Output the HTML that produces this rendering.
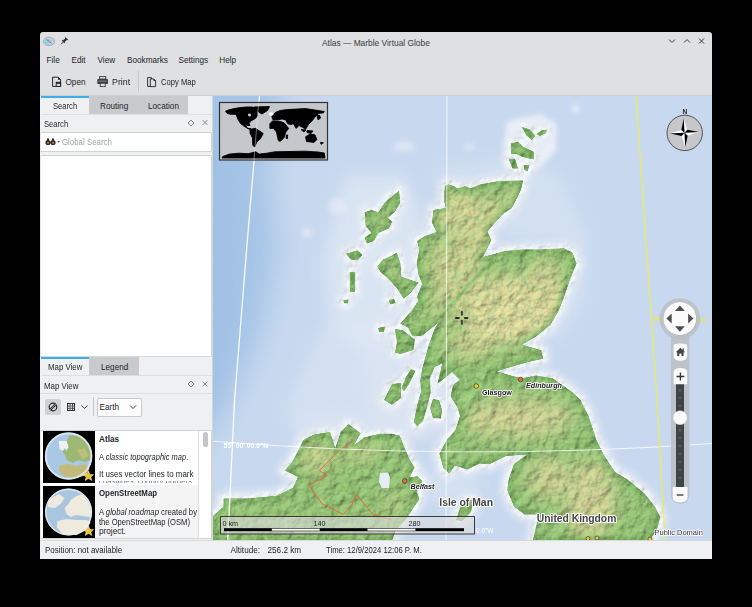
<!DOCTYPE html>
<html><head><meta charset="utf-8">
<style>
*{margin:0;padding:0;box-sizing:border-box}
html,body{width:752px;height:607px;background:#000;overflow:hidden;font-family:"Liberation Sans",sans-serif;color:#232629}
.a{position:absolute;white-space:nowrap}
.t{font-size:8.2px;line-height:10px}
svg{position:absolute;left:0;top:0}
</style></head>
<body>
<!-- window frame -->
<div class="a" style="left:40px;top:32px;width:672px;height:527px;background:#dee0e2;border-radius:3px 3px 0 0"></div>
<!-- title -->
<div class="a t" style="left:322px;top:37.6px;font-size:8.4px;color:#3a3d40">Atlas — Marble Virtual Globe</div>
<svg width="752" height="607" style="pointer-events:none">
  <!-- app icon -->
  <ellipse cx="49" cy="41.4" rx="5.6" ry="4.3" fill="#c9ccd0" stroke="#9a9ea2" stroke-width="0.7"/>
  <ellipse cx="48" cy="41.4" rx="3.4" ry="2.6" fill="#86d2f0"/>
  <path d="M46.5,39.3 L51.5,43.3" stroke="#c0504d" stroke-width="0.7"/>
  <!-- pin -->
  <path d="M61,44.3 L63.3,42" stroke="#232629" stroke-width="0.9"/><path d="M62,40.6 L63.2,40.6 L65.4,38.4 L65.1,37.7 L65.9,37.7 L67.4,39.2 L67.4,40 L66.7,39.7 L64.5,41.9 L64.5,43.1 Z" fill="#232629" stroke="#232629" stroke-width="0.5"/>
  <!-- window buttons -->
  <path d="M669,39.5 L672,42.5 L675,39.5" stroke="#3a3d40" stroke-width="1" fill="none"/>
  <path d="M684,42.5 L687,39.5 L690,42.5" stroke="#3a3d40" stroke-width="1" fill="none"/>
  <path d="M699,38.5 L704,43.5 M704,38.5 L699,43.5" stroke="#3a3d40" stroke-width="1" fill="none"/>
</svg>
<!-- menu -->
<div class="a t" style="left:46.5px;top:55.8px">File</div>
<div class="a t" style="left:71.5px;top:55.8px">Edit</div>
<div class="a t" style="left:97.5px;top:55.8px">View</div>
<div class="a t" style="left:127px;top:55.8px">Bookmarks</div>
<div class="a t" style="left:178.5px;top:55.8px">Settings</div>
<div class="a t" style="left:219.3px;top:55.8px">Help</div>
<!-- toolbar -->
<svg width="752" height="607">
  <!-- open icon -->
  <path d="M52.6,77.2 L58.2,77.2 L60.6,79.6 L60.6,86.4 L52.6,86.4 Z" fill="none" stroke="#232629" stroke-width="1"/>
  <path d="M58,76.8 L61,79.8 L58,79.8 Z" fill="#232629"/>
  <rect x="56.2" y="82.3" width="4.4" height="4.1" fill="#dee0e2" stroke="#232629" stroke-width="1"/>
  <rect x="56.2" y="82.3" width="4.4" height="1.6" fill="#232629"/>
  <!-- print icon -->
  <rect x="99.6" y="76.6" width="6.2" height="2.4" fill="none" stroke="#3a3d40" stroke-width="0.9"/>
  <rect x="97.3" y="79" width="10.7" height="5" rx="0.8" fill="#3a3d40"/>
  <rect x="98.5" y="80.6" width="8.3" height="1" fill="#8a8d90"/>
  <rect x="100.3" y="83.2" width="4.9" height="3.4" fill="#dee0e2" stroke="#3a3d40" stroke-width="0.9"/>
  <!-- copy icon -->
  <path d="M147.6,77.6 L151.6,77.6 L151.6,86.4 L147.6,86.4 Z" fill="none" stroke="#232629" stroke-width="0.9"/>
  <path d="M150.3,79 L153.8,79 L155.6,80.8 L155.6,86.6 L150.3,86.6 Z" fill="#dee0e2" stroke="#232629" stroke-width="0.9"/>
  <path d="M153.6,78.6 L156,81 L153.6,81 Z" fill="#232629"/>
</svg>
<div class="a t" style="left:65.5px;top:77.8px">Open</div>
<div class="a t" style="left:111.5px;top:77.8px;transform:scaleX(1.08);transform-origin:0 0">Print</div>
<div class="a" style="left:138px;top:71px;width:1px;height:21px;background:#c6c8ca"></div>
<div class="a t" style="left:161.3px;top:77.8px;transform:scaleX(0.93);transform-origin:0 0">Copy Map</div>
<div class="a" style="left:40px;top:95px;width:672px;height:1px;background:#cdd0d2"></div>

<!-- left panel -->
<div class="a" style="left:40px;top:96px;width:172px;height:444px;background:#eff0f1"></div>
<div class="a" style="left:212px;top:96px;width:1px;height:444px;background:#d3d5d7"></div>
<!-- tabs top -->
<div class="a" style="left:41px;top:96px;width:48px;height:2px;background:#3daee9"></div>
<div class="a" style="left:89px;top:96px;width:99px;height:18px;background:#c8cacc"></div>
<div class="a" style="left:41px;top:114px;width:171px;height:1px;background:#dcdee0"></div>
<div class="a t" style="left:53px;top:101.9px;transform:scaleX(0.93);transform-origin:0 0">Search</div>
<div class="a t" style="left:100px;top:101.9px">Routing</div>
<div class="a t" style="left:148px;top:101.9px">Location</div>
<div class="a t" style="left:44px;top:120px;transform:scaleX(0.93);transform-origin:0 0">Search</div>
<svg width="752" height="607">
  <path d="M191,120 L194,123 L191,126 L188,123 Z" fill="none" stroke="#7a7d80" stroke-width="0.9"/>
  <path d="M202.5,120 L207.5,125 M207.5,120 L202.5,125" stroke="#7a7d80" stroke-width="0.9"/>
</svg>
<div class="a" style="left:40px;top:132px;width:172px;height:20px;background:#fff;border:1px solid #d1d3d5;border-left-color:#e6e7e8;border-radius:2px"></div>
<svg width="752" height="607">
  <circle cx="48" cy="142.5" r="2.6" fill="#2b2b2b"/>
  <circle cx="53" cy="142.5" r="2.6" fill="#2b2b2b"/>
  <circle cx="48" cy="142.8" r="1.1" fill="#c87a3a"/>
  <circle cx="53" cy="142.8" r="1.1" fill="#c87a3a"/>
  <rect x="47" y="138.5" width="2" height="2.5" fill="#2b2b2b"/><rect x="52" y="138.5" width="2" height="2.5" fill="#2b2b2b"/>
  <path d="M57,141 L60,141 L58.5,143 Z" fill="#6b6e71"/>
</svg>
<div class="a t" style="left:62px;top:138px;color:#a0a2a4;transform:scaleX(0.96);transform-origin:0 0">Global Search</div>
<div class="a" style="left:40px;top:155px;width:172px;height:202px;background:#fff;border:1px solid #d1d3d5;border-left-color:#e6e7e8;border-radius:2px"></div>
<!-- tabs bottom -->
<div class="a" style="left:40px;top:356px;width:172px;height:1px;background:#d8dadc"></div>
<div class="a" style="left:41px;top:357px;width:48px;height:2px;background:#3daee9"></div>
<div class="a" style="left:89px;top:357px;width:50px;height:18px;background:#c8cacc"></div>
<div class="a" style="left:41px;top:375px;width:171px;height:1px;background:#dcdee0"></div>
<div class="a t" style="left:48px;top:363.2px;transform:scaleX(0.96);transform-origin:0 0">Map View</div>
<div class="a t" style="left:101px;top:363.2px">Legend</div>
<div class="a t" style="left:44px;top:381.8px;transform:scaleX(0.96);transform-origin:0 0">Map View</div>
<svg width="752" height="607">
  <path d="M191,381 L194,384 L191,387 L188,384 Z" fill="none" stroke="#7a7d80" stroke-width="0.9"/>
  <path d="M202.5,381.5 L207.5,386.5 M207.5,381.5 L202.5,386.5" stroke="#7a7d80" stroke-width="0.9"/>
</svg>
<div class="a" style="left:40px;top:393px;width:172px;height:1px;background:#dcdee0"></div>
<div class="a" style="left:45px;top:399px;width:16px;height:16px;background:#cfd1d3;border-radius:2px"></div>
<svg width="752" height="607">
  <circle cx="53" cy="407" r="3.8" fill="none" stroke="#232629" stroke-width="1.2"/>
  <path d="M50.2,409.8 L55.8,404.2" stroke="#232629" stroke-width="2.2"/>
  <path d="M50.2,409.8 L55.8,404.2" stroke="#cfd1d3" stroke-width="0.6"/>
  <rect x="67.5" y="403.5" width="7" height="7" fill="none" stroke="#232629" stroke-width="0.9"/>
  <path d="M70,403.5 V410.5 M72.5,403.5 V410.5 M67.5,406 H74.5 M67.5,408.3 H74.5" stroke="#232629" stroke-width="0.7"/>
  <path d="M81.5,405.5 L84.5,408.5 L87.5,405.5" fill="none" stroke="#232629" stroke-width="0.9"/>
</svg>
<div class="a" style="left:93px;top:397px;width:1px;height:19px;background:#c6c8ca"></div>
<div class="a" style="left:96.5px;top:398px;width:45.2px;height:18.5px;background:#fcfcfc;border:1px solid #c8cacc;border-radius:2px"></div>
<div class="a t" style="left:99.5px;top:403.4px">Earth</div>
<svg width="752" height="607"><path d="M130,405.5 L133,408.5 L136,405.5" fill="none" stroke="#232629" stroke-width="0.9"/></svg>
<!-- list -->
<div class="a" style="left:40px;top:430px;width:172px;height:109px;background:#fff;border:1px solid #d1d3d5;border-left-color:#e6e7e8"></div>
<div class="a" style="left:42px;top:485px;width:156px;height:53px;background:#f4f4f5"></div>
<div class="a" style="left:198px;top:431px;width:1px;height:108px;background:#dcdee0"></div>
<div class="a" style="left:203px;top:432px;width:5px;height:15px;background:#c2c4c6;border-radius:3px"></div>
<svg width="752" height="607">
  <defs>
    <radialGradient id="g1" cx="0.45" cy="0.4" r="0.6">
      <stop offset="0" stop-color="#b9cf9a"/><stop offset="0.6" stop-color="#a9c49a"/><stop offset="1" stop-color="#d7e3ec"/>
    </radialGradient>
    <radialGradient id="g2" cx="0.45" cy="0.4" r="0.6">
      <stop offset="0" stop-color="#c7d6e4"/><stop offset="0.7" stop-color="#d0dbe2"/><stop offset="1" stop-color="#e3e9ee"/>
    </radialGradient>
  </defs>
  <rect x="43" y="431" width="52" height="52" fill="#000"/>
  <g transform="translate(68.6,456)">
    <circle r="23.5" fill="#a8c8e6"/>
    <path d="M1,-21 L10,-20 L18,-14 L22,-4 L23,4 L16,6 L10,4 L4,7 L-2,4 L-4,-2 L0,-8 L-2,-14 Z" fill="#9cb872"/>
    <path d="M8,-6 L16,-8 L20,0 L14,3 Z" fill="#c6c07e" opacity="0.8"/>
    <path d="M-9,9 L0,8 L8,10 L16,8 L21,12 L18,19 L8,22 L-4,21 L-10,15 Z" fill="#c2bb7c"/>
    <path d="M-10,-15 L-2,-15 L0,-9 L-4,-4 L-9,-7 Z" fill="#eef2f4"/>
    <path d="M-6,-5 L-3.5,-8 L-2,-3 L-5,-2 Z" fill="#9cb872"/>
    <circle r="22.8" fill="none" stroke="#e3edf5" stroke-width="2" opacity="0.85"/>
  </g>
  <path d="M88.5,471 L90,474.5 L93.6,474.7 L90.8,477 L91.8,480.5 L88.5,478.5 L85.2,480.5 L86.2,477 L83.4,474.7 L87,474.5 Z" fill="#f2c230" stroke="#fff7c0" stroke-width="0.5"/>
  <rect x="43" y="486" width="52" height="52" fill="#000"/>
  <g transform="translate(68.6,512)">
    <circle r="23.5" fill="#a9c5df"/>
    <path d="M-20,-12 L-10,-18 L-4,-14 L-8,-8 L-14,-4 L-21,-5 Z" fill="#efeade"/>
    <path d="M2,-12 L8,-16 L14,-18 L20,-10 L23,0 L22,5 L14,4 L8,3 L2,5 L-2,2 L-4,-4 L0,-8 Z" fill="#efeade"/>
    <path d="M-11,9 L-2,7 L8,8 L18,8 L22,10 L18,18 L8,23 L-6,22 L-12,15 Z" fill="#efeade"/>
    <circle r="22.8" fill="none" stroke="#eef2f6" stroke-width="1.4" opacity="0.8"/>
  </g>
  <path d="M88.5,526 L90,529.5 L93.6,529.7 L90.8,532 L91.8,535.5 L88.5,533.5 L85.2,535.5 L86.2,532 L83.4,529.7 L87,529.5 Z" fill="#f2c230" stroke="#fff7c0" stroke-width="0.5"/>
</svg>
<div class="a t" style="left:99px;top:434.9px;font-weight:bold">Atlas</div>
<div class="a t" style="left:99px;top:452.7px;transform:scaleX(0.916);transform-origin:0 0">A <i>classic topographic map</i>.</div>
<div class="a t" style="left:99px;top:470.4px;transform:scaleX(0.97);transform-origin:0 0">It uses vector lines to mark</div>
<div class="a" style="left:99px;top:480.5px;width:98px;height:2px;overflow:hidden"><div class="t" style="margin-top:-3.6px;color:#777;transform:scaleX(0.95);transform-origin:0 0">coastlines, country borders</div></div>
<div class="a t" style="left:99px;top:489.3px;font-weight:bold;transform:scaleX(0.96);transform-origin:0 0">OpenStreetMap</div>
<div class="a t" style="left:99px;top:508px;transform:scaleX(0.94);transform-origin:0 0">A <i>global roadmap</i> created by</div>
<div class="a t" style="left:99px;top:517.5px;transform:scaleX(0.93);transform-origin:0 0">the OpenStreetMap (OSM)</div>
<div class="a t" style="left:99px;top:527px">project.</div>


<svg width="752" height="607" viewBox="0 0 752 607">
  <defs>
    <clipPath id="mapclip"><rect x="213" y="96" width="499" height="444"/></clipPath>
    <clipPath id="landclip"><path d="M444.7,186 L448,184.4 L454,186 L457.4,188.4 L465.4,186 L470.2,188.4 L480,184.4 L499,181 L523,180.6 L521,190 L512,207.7 L501.9,215 L487.3,231.6 L491.3,240 L483,257 L505.2,251 L522,249.6 L541.6,249.6 L564,248.2 L572.4,252.4 L576.6,263.6 L569.6,280.4 L564,297.2 L558.4,311.2 L550,325.2 L536,336.4 L522,344.8 L541.6,350.3 L543,358.7 L530.4,361.5 L510.8,367.1 L496.8,371.3 L510.8,375.5 L522,378.3 L536,375.5 L552.8,378.3 L572.4,392.3 L580.5,400 L588.5,416 L596.4,440 L604.4,456 L615,472 L628.3,480 L644.3,493.2 L654.9,506.5 L660.2,517.1 L657.6,527.8 L649.6,541 L532.6,541 L536.5,525.1 L539.2,514.5 L524.6,514.5 L514,506.5 L507.3,490.5 L508.6,479.9 L513.9,464 L527.2,454.6 L506,456 L490,464 L480,463.5 L467,469.4 L455.1,465.5 L449.2,473.4 L443.2,467.4 L439.3,453.6 L447,440 L455.4,430 L460,416 L457.7,408 L450.7,396.5 L453,385 L460,380 L452,372 L446.1,376.9 L437.5,383.8 L440,373 L442.4,363.3 L434.5,367.2 L430,378 L430.6,393.1 L427.7,404.6 L423.1,420.7 L417.3,426.5 L413.8,421.9 L417.3,404.6 L421.3,390.8 L420.2,381.5 L422,370 L424.7,359.3 L429.3,343.5 L434.5,329 L438.5,322.4 L421.4,336.2 L412.1,335.6 L408.2,327.7 L400.3,323.7 L412.1,309.9 L418.7,300 L416.8,297.2 L422.1,283.9 L418.1,273.2 L416.8,262.6 L419.4,249.3 L417,241 L425,236 L436.7,232 L432,222.7 L433.5,210 L446,208 L443.9,200.3 Z M212,517 L223.6,506.4 L223.6,498.4 L247.6,498.4 L276.8,495.7 L292.8,487.8 L298.1,477.1 L284.8,470.5 L292.8,461.2 L303.4,439.9 L314,434.6 L330,431.9 L335.3,447.9 L340.7,431.9 L348.6,423.9 L360.6,433.2 L354,445.2 L364.6,437.2 L380,433.8 L391.9,433.8 L399.8,435.8 L403.7,445.7 L409.6,459.5 L414.6,467.4 L409.6,477.3 L417.5,476.3 L422.5,481.3 L419.5,487.2 L416.6,491.1 L419.5,499 L412.6,508.9 L407.7,516.8 L395.8,530.7 L391.9,541 L212,541 Z M399.1,190.4 L400.3,203 L394.5,212.3 L387.6,218 L392.2,221.5 L388.8,228.4 L378.4,233 L373.8,241 L366.9,243.4 L364.6,237.6 L371.5,233 L365.7,226.1 L364.6,212.3 L371.5,210 L378.4,212.3 L385.3,201.9 Z M346.1,253.7 L357.6,250.3 L362.3,254.9 L357.6,260.2 L350.7,259.5 Z M349.6,272.2 L355.3,272.2 L355,291.8 L350,291.8 Z M343.4,300 L348.4,299.4 L348,303.3 L344,303.3 Z M377.2,266.4 L383,259.5 L391.1,256 L396.8,252.6 L400.3,263 L401.4,276.8 L418.7,282.5 L410.6,292.9 L403.7,298.7 L396.8,288.3 L387.6,277.9 L380.7,272.2 Z M388.8,300 L394,298.7 L395.7,303 L390,304.4 Z M395,329 L402.9,330.3 L414.8,339.5 L413.5,350 L400.3,354 L395,352.7 L397,342 Z M378.2,328 L384.9,326.4 L384,331.7 L379,331.7 Z M411,369 L415.5,371 L409,384 L404,391 L401.5,388 L406,377 Z M392,384 L400.7,383 L401,398 L392,404.8 L384,400 Z M433,399 L439,400 L442.1,410 L441,418.4 L433,418 L430,408 Z M456,520 L460,508 L468,500 L474,500.5 L471,512 L462,521 Z M521.5,126.8 L530,129.5 L535.5,136 L532,140 L526.5,135.5 Z M536.8,134 L541,130.5 L547,129.5 L545.5,133.5 L539.5,136 Z M510.8,143.5 L518,141.8 L523.5,147 L533.8,151.8 L533.8,159.5 L522.5,157 L516.5,154 L511,154 Z M508.8,159.2 L515,158.8 L518,168.5 L512.5,168.5 Z M523.5,165.2 L529.5,165 L527.5,171.5 L524.5,170 Z"/></clipPath>
    <filter id="blur1" x="-20%" y="-20%" width="140%" height="140%"><feGaussianBlur stdDeviation="1.2"/></filter>
    <filter id="blur2" x="-20%" y="-20%" width="140%" height="140%"><feGaussianBlur stdDeviation="2.5"/></filter>
    <filter id="blur6" x="-50%" y="-50%" width="200%" height="200%"><feGaussianBlur stdDeviation="8"/></filter>
    <filter id="blur12" x="-50%" y="-50%" width="200%" height="200%"><feGaussianBlur stdDeviation="14"/></filter>
    <filter id="tex" x="0" y="0" width="100%" height="100%">
      <feTurbulence type="turbulence" baseFrequency="0.09 0.12" numOctaves="4" seed="3" result="t"/>
      <feColorMatrix in="t" values="0 0 0 0 0.34  0 0 0 0 0.56  0 0 0 0 0.24  -3.2 0 0 0 1.0" result="c"/>
      <feGaussianBlur in="c" stdDeviation="0.4"/>
    </filter>
    <filter id="relief" x="213" y="96" width="499" height="444" filterUnits="userSpaceOnUse">
      <feTurbulence type="fractalNoise" baseFrequency="0.09" numOctaves="4" seed="5" result="noise"/>
      <feDiffuseLighting in="noise" lighting-color="#fff" surfaceScale="2.8" diffuseConstant="1.05" result="light">
        <feDistantLight azimuth="225" elevation="55"/>
      </feDiffuseLighting>
      <feComposite in="light" in2="SourceGraphic" operator="arithmetic" k1="1.2" k2="0" k3="0" k4="0" result="mul"/>
      <feComposite in="mul" in2="SourceGraphic" operator="in"/>
    </filter>
    <filter id="reliefsea" x="213" y="96" width="499" height="444" filterUnits="userSpaceOnUse">
      <feTurbulence type="fractalNoise" baseFrequency="0.12" numOctaves="3" seed="8" result="noise"/>
      <feDiffuseLighting in="noise" lighting-color="#fff" surfaceScale="2.5" diffuseConstant="1.05" result="light">
        <feDistantLight azimuth="225" elevation="55"/>
      </feDiffuseLighting>
      <feGaussianBlur in="SourceGraphic" stdDeviation="2.2" result="soft"/>
      <feComposite in="light" in2="soft" operator="arithmetic" k1="1.1" k2="0" k3="0" k4="0" result="mul"/>
      <feComposite in="mul" in2="soft" operator="in"/>
    </filter>
    <filter id="seatex" x="0" y="0" width="100%" height="100%">
      <feTurbulence type="fractalNoise" baseFrequency="0.05" numOctaves="2" seed="11" result="t"/>
      <feColorMatrix in="t" values="0 0 0 0 1  0 0 0 0 1  0 0 0 0 1  0 0 0 -1.2 0.62"/>
    </filter>
  </defs>
  <g clip-path="url(#mapclip)">
    <rect x="213" y="96" width="499" height="444" fill="#c8d9ef"/>
    <!-- deep water west -->
    <path d="M150,40 L290,40 L268,170 L278,250 L262,330 L236,390 L200,450 L150,450 Z" fill="#a5c4e6" filter="url(#blur12)"/>
    <path d="M150,150 L226,150 L232,300 L205,420 L150,420 Z" fill="#9ebfe4" filter="url(#blur12)" opacity="0.7"/>
    <!-- shelf light zones -->
    <g fill="#dfe8f3" filter="url(#blur6)">
      <path d="M345,175 L405,175 L425,225 L412,300 L400,350 L372,356 L330,330 L322,262 Z" opacity="0.75"/>
      <path d="M440,165 L520,160 L560,175 L590,240 L585,300 L560,340 L530,330 L560,280 L565,250 L520,240 L490,230 L440,200 Z" opacity="0.45"/>
      <path d="M360,360 L430,350 L445,420 L410,440 L372,420 Z" opacity="0.55"/>
      <ellipse cx="452" cy="485" rx="30" ry="22" opacity="0.55"/>
      <ellipse cx="330" cy="425" rx="40" ry="12" opacity="0.5"/>
      <path d="M320,330 L420,310 L450,440 L300,440 L285,410 Z" opacity="0.55"/>
    </g>
    <g fill="#e9eff7" filter="url(#blur2)">
      <path d="M506,122 L540,114 L556,124 L556,150 L540,168 L522,174 L508,170 L505,150 Z"/>
      <ellipse cx="338" cy="206" rx="10" ry="8" opacity="0.6"/>
      <ellipse cx="307" cy="233" rx="6" ry="4.5" opacity="0.6"/>
      <ellipse cx="404" cy="146" rx="11" ry="5" opacity="0.6"/>
      <ellipse cx="469" cy="147" rx="4.5" ry="3.5" opacity="0.7"/>
      <circle cx="575.6" cy="109" r="3.5"/>
    </g>
    <!-- coastal halo -->
    <path d="M444.7,186 L448,184.4 L454,186 L457.4,188.4 L465.4,186 L470.2,188.4 L480,184.4 L499,181 L523,180.6 L521,190 L512,207.7 L501.9,215 L487.3,231.6 L491.3,240 L483,257 L505.2,251 L522,249.6 L541.6,249.6 L564,248.2 L572.4,252.4 L576.6,263.6 L569.6,280.4 L564,297.2 L558.4,311.2 L550,325.2 L536,336.4 L522,344.8 L541.6,350.3 L543,358.7 L530.4,361.5 L510.8,367.1 L496.8,371.3 L510.8,375.5 L522,378.3 L536,375.5 L552.8,378.3 L572.4,392.3 L580.5,400 L588.5,416 L596.4,440 L604.4,456 L615,472 L628.3,480 L644.3,493.2 L654.9,506.5 L660.2,517.1 L657.6,527.8 L649.6,541 L532.6,541 L536.5,525.1 L539.2,514.5 L524.6,514.5 L514,506.5 L507.3,490.5 L508.6,479.9 L513.9,464 L527.2,454.6 L506,456 L490,464 L480,463.5 L467,469.4 L455.1,465.5 L449.2,473.4 L443.2,467.4 L439.3,453.6 L447,440 L455.4,430 L460,416 L457.7,408 L450.7,396.5 L453,385 L460,380 L452,372 L446.1,376.9 L437.5,383.8 L440,373 L442.4,363.3 L434.5,367.2 L430,378 L430.6,393.1 L427.7,404.6 L423.1,420.7 L417.3,426.5 L413.8,421.9 L417.3,404.6 L421.3,390.8 L420.2,381.5 L422,370 L424.7,359.3 L429.3,343.5 L434.5,329 L438.5,322.4 L421.4,336.2 L412.1,335.6 L408.2,327.7 L400.3,323.7 L412.1,309.9 L418.7,300 L416.8,297.2 L422.1,283.9 L418.1,273.2 L416.8,262.6 L419.4,249.3 L417,241 L425,236 L436.7,232 L432,222.7 L433.5,210 L446,208 L443.9,200.3 Z M212,517 L223.6,506.4 L223.6,498.4 L247.6,498.4 L276.8,495.7 L292.8,487.8 L298.1,477.1 L284.8,470.5 L292.8,461.2 L303.4,439.9 L314,434.6 L330,431.9 L335.3,447.9 L340.7,431.9 L348.6,423.9 L360.6,433.2 L354,445.2 L364.6,437.2 L380,433.8 L391.9,433.8 L399.8,435.8 L403.7,445.7 L409.6,459.5 L414.6,467.4 L409.6,477.3 L417.5,476.3 L422.5,481.3 L419.5,487.2 L416.6,491.1 L419.5,499 L412.6,508.9 L407.7,516.8 L395.8,530.7 L391.9,541 L212,541 Z M399.1,190.4 L400.3,203 L394.5,212.3 L387.6,218 L392.2,221.5 L388.8,228.4 L378.4,233 L373.8,241 L366.9,243.4 L364.6,237.6 L371.5,233 L365.7,226.1 L364.6,212.3 L371.5,210 L378.4,212.3 L385.3,201.9 Z M346.1,253.7 L357.6,250.3 L362.3,254.9 L357.6,260.2 L350.7,259.5 Z M349.6,272.2 L355.3,272.2 L355,291.8 L350,291.8 Z M343.4,300 L348.4,299.4 L348,303.3 L344,303.3 Z M377.2,266.4 L383,259.5 L391.1,256 L396.8,252.6 L400.3,263 L401.4,276.8 L418.7,282.5 L410.6,292.9 L403.7,298.7 L396.8,288.3 L387.6,277.9 L380.7,272.2 Z M388.8,300 L394,298.7 L395.7,303 L390,304.4 Z M395,329 L402.9,330.3 L414.8,339.5 L413.5,350 L400.3,354 L395,352.7 L397,342 Z M378.2,328 L384.9,326.4 L384,331.7 L379,331.7 Z M411,369 L415.5,371 L409,384 L404,391 L401.5,388 L406,377 Z M392,384 L400.7,383 L401,398 L392,404.8 L384,400 Z M433,399 L439,400 L442.1,410 L441,418.4 L433,418 L430,408 Z M456,520 L460,508 L468,500 L474,500.5 L471,512 L462,521 Z M521.5,126.8 L530,129.5 L535.5,136 L532,140 L526.5,135.5 Z M536.8,134 L541,130.5 L547,129.5 L545.5,133.5 L539.5,136 Z M510.8,143.5 L518,141.8 L523.5,147 L533.8,151.8 L533.8,159.5 L522.5,157 L516.5,154 L511,154 Z M508.8,159.2 L515,158.8 L518,168.5 L512.5,168.5 Z M523.5,165.2 L529.5,165 L527.5,171.5 L524.5,170 Z" fill="none" stroke="#e3ebf5" stroke-width="18" stroke-linejoin="round" filter="url(#blur2)" opacity="0.6"/>
    <path d="M444.7,186 L448,184.4 L454,186 L457.4,188.4 L465.4,186 L470.2,188.4 L480,184.4 L499,181 L523,180.6 L521,190 L512,207.7 L501.9,215 L487.3,231.6 L491.3,240 L483,257 L505.2,251 L522,249.6 L541.6,249.6 L564,248.2 L572.4,252.4 L576.6,263.6 L569.6,280.4 L564,297.2 L558.4,311.2 L550,325.2 L536,336.4 L522,344.8 L541.6,350.3 L543,358.7 L530.4,361.5 L510.8,367.1 L496.8,371.3 L510.8,375.5 L522,378.3 L536,375.5 L552.8,378.3 L572.4,392.3 L580.5,400 L588.5,416 L596.4,440 L604.4,456 L615,472 L628.3,480 L644.3,493.2 L654.9,506.5 L660.2,517.1 L657.6,527.8 L649.6,541 L532.6,541 L536.5,525.1 L539.2,514.5 L524.6,514.5 L514,506.5 L507.3,490.5 L508.6,479.9 L513.9,464 L527.2,454.6 L506,456 L490,464 L480,463.5 L467,469.4 L455.1,465.5 L449.2,473.4 L443.2,467.4 L439.3,453.6 L447,440 L455.4,430 L460,416 L457.7,408 L450.7,396.5 L453,385 L460,380 L452,372 L446.1,376.9 L437.5,383.8 L440,373 L442.4,363.3 L434.5,367.2 L430,378 L430.6,393.1 L427.7,404.6 L423.1,420.7 L417.3,426.5 L413.8,421.9 L417.3,404.6 L421.3,390.8 L420.2,381.5 L422,370 L424.7,359.3 L429.3,343.5 L434.5,329 L438.5,322.4 L421.4,336.2 L412.1,335.6 L408.2,327.7 L400.3,323.7 L412.1,309.9 L418.7,300 L416.8,297.2 L422.1,283.9 L418.1,273.2 L416.8,262.6 L419.4,249.3 L417,241 L425,236 L436.7,232 L432,222.7 L433.5,210 L446,208 L443.9,200.3 Z M212,517 L223.6,506.4 L223.6,498.4 L247.6,498.4 L276.8,495.7 L292.8,487.8 L298.1,477.1 L284.8,470.5 L292.8,461.2 L303.4,439.9 L314,434.6 L330,431.9 L335.3,447.9 L340.7,431.9 L348.6,423.9 L360.6,433.2 L354,445.2 L364.6,437.2 L380,433.8 L391.9,433.8 L399.8,435.8 L403.7,445.7 L409.6,459.5 L414.6,467.4 L409.6,477.3 L417.5,476.3 L422.5,481.3 L419.5,487.2 L416.6,491.1 L419.5,499 L412.6,508.9 L407.7,516.8 L395.8,530.7 L391.9,541 L212,541 Z M399.1,190.4 L400.3,203 L394.5,212.3 L387.6,218 L392.2,221.5 L388.8,228.4 L378.4,233 L373.8,241 L366.9,243.4 L364.6,237.6 L371.5,233 L365.7,226.1 L364.6,212.3 L371.5,210 L378.4,212.3 L385.3,201.9 Z M346.1,253.7 L357.6,250.3 L362.3,254.9 L357.6,260.2 L350.7,259.5 Z M349.6,272.2 L355.3,272.2 L355,291.8 L350,291.8 Z M343.4,300 L348.4,299.4 L348,303.3 L344,303.3 Z M377.2,266.4 L383,259.5 L391.1,256 L396.8,252.6 L400.3,263 L401.4,276.8 L418.7,282.5 L410.6,292.9 L403.7,298.7 L396.8,288.3 L387.6,277.9 L380.7,272.2 Z M388.8,300 L394,298.7 L395.7,303 L390,304.4 Z M395,329 L402.9,330.3 L414.8,339.5 L413.5,350 L400.3,354 L395,352.7 L397,342 Z M378.2,328 L384.9,326.4 L384,331.7 L379,331.7 Z M411,369 L415.5,371 L409,384 L404,391 L401.5,388 L406,377 Z M392,384 L400.7,383 L401,398 L392,404.8 L384,400 Z M433,399 L439,400 L442.1,410 L441,418.4 L433,418 L430,408 Z M456,520 L460,508 L468,500 L474,500.5 L471,512 L462,521 Z M521.5,126.8 L530,129.5 L535.5,136 L532,140 L526.5,135.5 Z M536.8,134 L541,130.5 L547,129.5 L545.5,133.5 L539.5,136 Z M510.8,143.5 L518,141.8 L523.5,147 L533.8,151.8 L533.8,159.5 L522.5,157 L516.5,154 L511,154 Z M508.8,159.2 L515,158.8 L518,168.5 L512.5,168.5 Z M523.5,165.2 L529.5,165 L527.5,171.5 L524.5,170 Z" fill="none" stroke="#eaf0f7" stroke-width="10" stroke-linejoin="round" filter="url(#blur1)" opacity="0.7"/>
    <path d="M444.7,186 L448,184.4 L454,186 L457.4,188.4 L465.4,186 L470.2,188.4 L480,184.4 L499,181 L523,180.6 L521,190 L512,207.7 L501.9,215 L487.3,231.6 L491.3,240 L483,257 L505.2,251 L522,249.6 L541.6,249.6 L564,248.2 L572.4,252.4 L576.6,263.6 L569.6,280.4 L564,297.2 L558.4,311.2 L550,325.2 L536,336.4 L522,344.8 L541.6,350.3 L543,358.7 L530.4,361.5 L510.8,367.1 L496.8,371.3 L510.8,375.5 L522,378.3 L536,375.5 L552.8,378.3 L572.4,392.3 L580.5,400 L588.5,416 L596.4,440 L604.4,456 L615,472 L628.3,480 L644.3,493.2 L654.9,506.5 L660.2,517.1 L657.6,527.8 L649.6,541 L532.6,541 L536.5,525.1 L539.2,514.5 L524.6,514.5 L514,506.5 L507.3,490.5 L508.6,479.9 L513.9,464 L527.2,454.6 L506,456 L490,464 L480,463.5 L467,469.4 L455.1,465.5 L449.2,473.4 L443.2,467.4 L439.3,453.6 L447,440 L455.4,430 L460,416 L457.7,408 L450.7,396.5 L453,385 L460,380 L452,372 L446.1,376.9 L437.5,383.8 L440,373 L442.4,363.3 L434.5,367.2 L430,378 L430.6,393.1 L427.7,404.6 L423.1,420.7 L417.3,426.5 L413.8,421.9 L417.3,404.6 L421.3,390.8 L420.2,381.5 L422,370 L424.7,359.3 L429.3,343.5 L434.5,329 L438.5,322.4 L421.4,336.2 L412.1,335.6 L408.2,327.7 L400.3,323.7 L412.1,309.9 L418.7,300 L416.8,297.2 L422.1,283.9 L418.1,273.2 L416.8,262.6 L419.4,249.3 L417,241 L425,236 L436.7,232 L432,222.7 L433.5,210 L446,208 L443.9,200.3 Z M212,517 L223.6,506.4 L223.6,498.4 L247.6,498.4 L276.8,495.7 L292.8,487.8 L298.1,477.1 L284.8,470.5 L292.8,461.2 L303.4,439.9 L314,434.6 L330,431.9 L335.3,447.9 L340.7,431.9 L348.6,423.9 L360.6,433.2 L354,445.2 L364.6,437.2 L380,433.8 L391.9,433.8 L399.8,435.8 L403.7,445.7 L409.6,459.5 L414.6,467.4 L409.6,477.3 L417.5,476.3 L422.5,481.3 L419.5,487.2 L416.6,491.1 L419.5,499 L412.6,508.9 L407.7,516.8 L395.8,530.7 L391.9,541 L212,541 Z M399.1,190.4 L400.3,203 L394.5,212.3 L387.6,218 L392.2,221.5 L388.8,228.4 L378.4,233 L373.8,241 L366.9,243.4 L364.6,237.6 L371.5,233 L365.7,226.1 L364.6,212.3 L371.5,210 L378.4,212.3 L385.3,201.9 Z M346.1,253.7 L357.6,250.3 L362.3,254.9 L357.6,260.2 L350.7,259.5 Z M349.6,272.2 L355.3,272.2 L355,291.8 L350,291.8 Z M343.4,300 L348.4,299.4 L348,303.3 L344,303.3 Z M377.2,266.4 L383,259.5 L391.1,256 L396.8,252.6 L400.3,263 L401.4,276.8 L418.7,282.5 L410.6,292.9 L403.7,298.7 L396.8,288.3 L387.6,277.9 L380.7,272.2 Z M388.8,300 L394,298.7 L395.7,303 L390,304.4 Z M395,329 L402.9,330.3 L414.8,339.5 L413.5,350 L400.3,354 L395,352.7 L397,342 Z M378.2,328 L384.9,326.4 L384,331.7 L379,331.7 Z M411,369 L415.5,371 L409,384 L404,391 L401.5,388 L406,377 Z M392,384 L400.7,383 L401,398 L392,404.8 L384,400 Z M433,399 L439,400 L442.1,410 L441,418.4 L433,418 L430,408 Z M456,520 L460,508 L468,500 L474,500.5 L471,512 L462,521 Z M521.5,126.8 L530,129.5 L535.5,136 L532,140 L526.5,135.5 Z M536.8,134 L541,130.5 L547,129.5 L545.5,133.5 L539.5,136 Z M510.8,143.5 L518,141.8 L523.5,147 L533.8,151.8 L533.8,159.5 L522.5,157 L516.5,154 L511,154 Z M508.8,159.2 L515,158.8 L518,168.5 L512.5,168.5 Z M523.5,165.2 L529.5,165 L527.5,171.5 L524.5,170 Z" fill="none" stroke="#f1f5fa" stroke-width="6" stroke-linejoin="round" filter="url(#blur1)" opacity="0.95"/>
    <g filter="url(#reliefsea)" opacity="0.4"><path d="M444.7,186 L448,184.4 L454,186 L457.4,188.4 L465.4,186 L470.2,188.4 L480,184.4 L499,181 L523,180.6 L521,190 L512,207.7 L501.9,215 L487.3,231.6 L491.3,240 L483,257 L505.2,251 L522,249.6 L541.6,249.6 L564,248.2 L572.4,252.4 L576.6,263.6 L569.6,280.4 L564,297.2 L558.4,311.2 L550,325.2 L536,336.4 L522,344.8 L541.6,350.3 L543,358.7 L530.4,361.5 L510.8,367.1 L496.8,371.3 L510.8,375.5 L522,378.3 L536,375.5 L552.8,378.3 L572.4,392.3 L580.5,400 L588.5,416 L596.4,440 L604.4,456 L615,472 L628.3,480 L644.3,493.2 L654.9,506.5 L660.2,517.1 L657.6,527.8 L649.6,541 L532.6,541 L536.5,525.1 L539.2,514.5 L524.6,514.5 L514,506.5 L507.3,490.5 L508.6,479.9 L513.9,464 L527.2,454.6 L506,456 L490,464 L480,463.5 L467,469.4 L455.1,465.5 L449.2,473.4 L443.2,467.4 L439.3,453.6 L447,440 L455.4,430 L460,416 L457.7,408 L450.7,396.5 L453,385 L460,380 L452,372 L446.1,376.9 L437.5,383.8 L440,373 L442.4,363.3 L434.5,367.2 L430,378 L430.6,393.1 L427.7,404.6 L423.1,420.7 L417.3,426.5 L413.8,421.9 L417.3,404.6 L421.3,390.8 L420.2,381.5 L422,370 L424.7,359.3 L429.3,343.5 L434.5,329 L438.5,322.4 L421.4,336.2 L412.1,335.6 L408.2,327.7 L400.3,323.7 L412.1,309.9 L418.7,300 L416.8,297.2 L422.1,283.9 L418.1,273.2 L416.8,262.6 L419.4,249.3 L417,241 L425,236 L436.7,232 L432,222.7 L433.5,210 L446,208 L443.9,200.3 Z M212,517 L223.6,506.4 L223.6,498.4 L247.6,498.4 L276.8,495.7 L292.8,487.8 L298.1,477.1 L284.8,470.5 L292.8,461.2 L303.4,439.9 L314,434.6 L330,431.9 L335.3,447.9 L340.7,431.9 L348.6,423.9 L360.6,433.2 L354,445.2 L364.6,437.2 L380,433.8 L391.9,433.8 L399.8,435.8 L403.7,445.7 L409.6,459.5 L414.6,467.4 L409.6,477.3 L417.5,476.3 L422.5,481.3 L419.5,487.2 L416.6,491.1 L419.5,499 L412.6,508.9 L407.7,516.8 L395.8,530.7 L391.9,541 L212,541 Z M399.1,190.4 L400.3,203 L394.5,212.3 L387.6,218 L392.2,221.5 L388.8,228.4 L378.4,233 L373.8,241 L366.9,243.4 L364.6,237.6 L371.5,233 L365.7,226.1 L364.6,212.3 L371.5,210 L378.4,212.3 L385.3,201.9 Z M346.1,253.7 L357.6,250.3 L362.3,254.9 L357.6,260.2 L350.7,259.5 Z M349.6,272.2 L355.3,272.2 L355,291.8 L350,291.8 Z M343.4,300 L348.4,299.4 L348,303.3 L344,303.3 Z M377.2,266.4 L383,259.5 L391.1,256 L396.8,252.6 L400.3,263 L401.4,276.8 L418.7,282.5 L410.6,292.9 L403.7,298.7 L396.8,288.3 L387.6,277.9 L380.7,272.2 Z M388.8,300 L394,298.7 L395.7,303 L390,304.4 Z M395,329 L402.9,330.3 L414.8,339.5 L413.5,350 L400.3,354 L395,352.7 L397,342 Z M378.2,328 L384.9,326.4 L384,331.7 L379,331.7 Z M411,369 L415.5,371 L409,384 L404,391 L401.5,388 L406,377 Z M392,384 L400.7,383 L401,398 L392,404.8 L384,400 Z M433,399 L439,400 L442.1,410 L441,418.4 L433,418 L430,408 Z M456,520 L460,508 L468,500 L474,500.5 L471,512 L462,521 Z M521.5,126.8 L530,129.5 L535.5,136 L532,140 L526.5,135.5 Z M536.8,134 L541,130.5 L547,129.5 L545.5,133.5 L539.5,136 Z M510.8,143.5 L518,141.8 L523.5,147 L533.8,151.8 L533.8,159.5 L522.5,157 L516.5,154 L511,154 Z M508.8,159.2 L515,158.8 L518,168.5 L512.5,168.5 Z M523.5,165.2 L529.5,165 L527.5,171.5 L524.5,170 Z" fill="none" stroke="#f4f7fb" stroke-width="12" stroke-linejoin="round"/></g>
    <!-- land -->
    <g filter="url(#relief)">
    <path d="M444.7,186 L448,184.4 L454,186 L457.4,188.4 L465.4,186 L470.2,188.4 L480,184.4 L499,181 L523,180.6 L521,190 L512,207.7 L501.9,215 L487.3,231.6 L491.3,240 L483,257 L505.2,251 L522,249.6 L541.6,249.6 L564,248.2 L572.4,252.4 L576.6,263.6 L569.6,280.4 L564,297.2 L558.4,311.2 L550,325.2 L536,336.4 L522,344.8 L541.6,350.3 L543,358.7 L530.4,361.5 L510.8,367.1 L496.8,371.3 L510.8,375.5 L522,378.3 L536,375.5 L552.8,378.3 L572.4,392.3 L580.5,400 L588.5,416 L596.4,440 L604.4,456 L615,472 L628.3,480 L644.3,493.2 L654.9,506.5 L660.2,517.1 L657.6,527.8 L649.6,541 L532.6,541 L536.5,525.1 L539.2,514.5 L524.6,514.5 L514,506.5 L507.3,490.5 L508.6,479.9 L513.9,464 L527.2,454.6 L506,456 L490,464 L480,463.5 L467,469.4 L455.1,465.5 L449.2,473.4 L443.2,467.4 L439.3,453.6 L447,440 L455.4,430 L460,416 L457.7,408 L450.7,396.5 L453,385 L460,380 L452,372 L446.1,376.9 L437.5,383.8 L440,373 L442.4,363.3 L434.5,367.2 L430,378 L430.6,393.1 L427.7,404.6 L423.1,420.7 L417.3,426.5 L413.8,421.9 L417.3,404.6 L421.3,390.8 L420.2,381.5 L422,370 L424.7,359.3 L429.3,343.5 L434.5,329 L438.5,322.4 L421.4,336.2 L412.1,335.6 L408.2,327.7 L400.3,323.7 L412.1,309.9 L418.7,300 L416.8,297.2 L422.1,283.9 L418.1,273.2 L416.8,262.6 L419.4,249.3 L417,241 L425,236 L436.7,232 L432,222.7 L433.5,210 L446,208 L443.9,200.3 Z M212,517 L223.6,506.4 L223.6,498.4 L247.6,498.4 L276.8,495.7 L292.8,487.8 L298.1,477.1 L284.8,470.5 L292.8,461.2 L303.4,439.9 L314,434.6 L330,431.9 L335.3,447.9 L340.7,431.9 L348.6,423.9 L360.6,433.2 L354,445.2 L364.6,437.2 L380,433.8 L391.9,433.8 L399.8,435.8 L403.7,445.7 L409.6,459.5 L414.6,467.4 L409.6,477.3 L417.5,476.3 L422.5,481.3 L419.5,487.2 L416.6,491.1 L419.5,499 L412.6,508.9 L407.7,516.8 L395.8,530.7 L391.9,541 L212,541 Z M399.1,190.4 L400.3,203 L394.5,212.3 L387.6,218 L392.2,221.5 L388.8,228.4 L378.4,233 L373.8,241 L366.9,243.4 L364.6,237.6 L371.5,233 L365.7,226.1 L364.6,212.3 L371.5,210 L378.4,212.3 L385.3,201.9 Z M346.1,253.7 L357.6,250.3 L362.3,254.9 L357.6,260.2 L350.7,259.5 Z M349.6,272.2 L355.3,272.2 L355,291.8 L350,291.8 Z M343.4,300 L348.4,299.4 L348,303.3 L344,303.3 Z M377.2,266.4 L383,259.5 L391.1,256 L396.8,252.6 L400.3,263 L401.4,276.8 L418.7,282.5 L410.6,292.9 L403.7,298.7 L396.8,288.3 L387.6,277.9 L380.7,272.2 Z M388.8,300 L394,298.7 L395.7,303 L390,304.4 Z M395,329 L402.9,330.3 L414.8,339.5 L413.5,350 L400.3,354 L395,352.7 L397,342 Z M378.2,328 L384.9,326.4 L384,331.7 L379,331.7 Z M411,369 L415.5,371 L409,384 L404,391 L401.5,388 L406,377 Z M392,384 L400.7,383 L401,398 L392,404.8 L384,400 Z M433,399 L439,400 L442.1,410 L441,418.4 L433,418 L430,408 Z M456,520 L460,508 L468,500 L474,500.5 L471,512 L462,521 Z M521.5,126.8 L530,129.5 L535.5,136 L532,140 L526.5,135.5 Z M536.8,134 L541,130.5 L547,129.5 L545.5,133.5 L539.5,136 Z M510.8,143.5 L518,141.8 L523.5,147 L533.8,151.8 L533.8,159.5 L522.5,157 L516.5,154 L511,154 Z M508.8,159.2 L515,158.8 L518,168.5 L512.5,168.5 Z M523.5,165.2 L529.5,165 L527.5,171.5 L524.5,170 Z" fill="#8fbb70"/>
    <g clip-path="url(#landclip)">
      <g filter="url(#blur6)">
        <ellipse cx="480" cy="225" rx="30" ry="30" fill="#cfcd92" opacity="0.85"/>
        <ellipse cx="462" cy="280" rx="22" ry="35" fill="#cfcd92" opacity="0.8"/>
        <ellipse cx="515" cy="310" rx="55" ry="35" fill="#d8d298"/>
        <ellipse cx="545" cy="285" rx="20" ry="28" fill="#d0cd94" opacity="0.8"/>
        <ellipse cx="440" cy="300" rx="10" ry="30" fill="#c6c78c" opacity="0.7"/>
        <ellipse cx="520" cy="418" rx="55" ry="20" fill="#c5c98e"/>
        <ellipse cx="590" cy="500" rx="26" ry="40" fill="#c9ca8f"/>
        <ellipse cx="548" cy="478" rx="22" ry="22" fill="#c3c88b"/>
        <ellipse cx="318" cy="458" rx="20" ry="14" fill="#c2c889" opacity="0.9"/>
        <ellipse cx="362" cy="452" rx="16" ry="10" fill="#c4c98b" opacity="0.8"/>
        <ellipse cx="395" cy="505" rx="12" ry="14" fill="#b9c486" opacity="0.6"/>
        <ellipse cx="505" cy="425" rx="40" ry="12" fill="#c9cb8f" opacity="0.8"/>
        <ellipse cx="392" cy="222" rx="10" ry="12" fill="#b6c184"/>
        <ellipse cx="455" cy="212" rx="22" ry="20" fill="#d0cd92" opacity="0.9"/>
        <ellipse cx="442" cy="262" rx="14" ry="22" fill="#cccb90" opacity="0.8"/>
        <ellipse cx="397" cy="274" rx="8" ry="10" fill="#c3c589" opacity="0.8"/>
        <ellipse cx="470" cy="345" rx="25" ry="14" fill="#cfcd92" opacity="0.8"/>
        <ellipse cx="520" cy="200" rx="15" ry="15" fill="#c8c88e" opacity="0.7"/>
      </g>
      <path d="M444.7,186 L448,184.4 L454,186 L457.4,188.4 L465.4,186 L470.2,188.4 L480,184.4 L499,181 L523,180.6 L521,190 L512,207.7 L501.9,215 L487.3,231.6 L491.3,240 L483,257 L505.2,251 L522,249.6 L541.6,249.6 L564,248.2 L572.4,252.4 L576.6,263.6 L569.6,280.4 L564,297.2 L558.4,311.2 L550,325.2 L536,336.4 L522,344.8 L541.6,350.3 L543,358.7 L530.4,361.5 L510.8,367.1 L496.8,371.3 L510.8,375.5 L522,378.3 L536,375.5 L552.8,378.3 L572.4,392.3 L580.5,400 L588.5,416 L596.4,440 L604.4,456 L615,472 L628.3,480 L644.3,493.2 L654.9,506.5 L660.2,517.1 L657.6,527.8 L649.6,541 L532.6,541 L536.5,525.1 L539.2,514.5 L524.6,514.5 L514,506.5 L507.3,490.5 L508.6,479.9 L513.9,464 L527.2,454.6 L506,456 L490,464 L480,463.5 L467,469.4 L455.1,465.5 L449.2,473.4 L443.2,467.4 L439.3,453.6 L447,440 L455.4,430 L460,416 L457.7,408 L450.7,396.5 L453,385 L460,380 L452,372 L446.1,376.9 L437.5,383.8 L440,373 L442.4,363.3 L434.5,367.2 L430,378 L430.6,393.1 L427.7,404.6 L423.1,420.7 L417.3,426.5 L413.8,421.9 L417.3,404.6 L421.3,390.8 L420.2,381.5 L422,370 L424.7,359.3 L429.3,343.5 L434.5,329 L438.5,322.4 L421.4,336.2 L412.1,335.6 L408.2,327.7 L400.3,323.7 L412.1,309.9 L418.7,300 L416.8,297.2 L422.1,283.9 L418.1,273.2 L416.8,262.6 L419.4,249.3 L417,241 L425,236 L436.7,232 L432,222.7 L433.5,210 L446,208 L443.9,200.3 Z M212,517 L223.6,506.4 L223.6,498.4 L247.6,498.4 L276.8,495.7 L292.8,487.8 L298.1,477.1 L284.8,470.5 L292.8,461.2 L303.4,439.9 L314,434.6 L330,431.9 L335.3,447.9 L340.7,431.9 L348.6,423.9 L360.6,433.2 L354,445.2 L364.6,437.2 L380,433.8 L391.9,433.8 L399.8,435.8 L403.7,445.7 L409.6,459.5 L414.6,467.4 L409.6,477.3 L417.5,476.3 L422.5,481.3 L419.5,487.2 L416.6,491.1 L419.5,499 L412.6,508.9 L407.7,516.8 L395.8,530.7 L391.9,541 L212,541 Z M399.1,190.4 L400.3,203 L394.5,212.3 L387.6,218 L392.2,221.5 L388.8,228.4 L378.4,233 L373.8,241 L366.9,243.4 L364.6,237.6 L371.5,233 L365.7,226.1 L364.6,212.3 L371.5,210 L378.4,212.3 L385.3,201.9 Z M346.1,253.7 L357.6,250.3 L362.3,254.9 L357.6,260.2 L350.7,259.5 Z M349.6,272.2 L355.3,272.2 L355,291.8 L350,291.8 Z M343.4,300 L348.4,299.4 L348,303.3 L344,303.3 Z M377.2,266.4 L383,259.5 L391.1,256 L396.8,252.6 L400.3,263 L401.4,276.8 L418.7,282.5 L410.6,292.9 L403.7,298.7 L396.8,288.3 L387.6,277.9 L380.7,272.2 Z M388.8,300 L394,298.7 L395.7,303 L390,304.4 Z M395,329 L402.9,330.3 L414.8,339.5 L413.5,350 L400.3,354 L395,352.7 L397,342 Z M378.2,328 L384.9,326.4 L384,331.7 L379,331.7 Z M411,369 L415.5,371 L409,384 L404,391 L401.5,388 L406,377 Z M392,384 L400.7,383 L401,398 L392,404.8 L384,400 Z M433,399 L439,400 L442.1,410 L441,418.4 L433,418 L430,408 Z M456,520 L460,508 L468,500 L474,500.5 L471,512 L462,521 Z M521.5,126.8 L530,129.5 L535.5,136 L532,140 L526.5,135.5 Z M536.8,134 L541,130.5 L547,129.5 L545.5,133.5 L539.5,136 Z M510.8,143.5 L518,141.8 L523.5,147 L533.8,151.8 L533.8,159.5 L522.5,157 L516.5,154 L511,154 Z M508.8,159.2 L515,158.8 L518,168.5 L512.5,168.5 Z M523.5,165.2 L529.5,165 L527.5,171.5 L524.5,170 Z" fill="none" stroke="#66a052" stroke-width="6" filter="url(#blur2)" opacity="0.8"/>
      <path d="M420,337 L440,318 L468,286 L496,257" fill="none" stroke="#6aa257" stroke-width="3" filter="url(#blur1)" opacity="0.8"/>
      <rect x="213" y="96" width="499" height="444" filter="url(#tex)" opacity="0.85"/>
    </g>
    </g>
    <!-- lough neagh -->
    <path d="M380,473 L388,472.4 L390,478 L389,488 L382,488.2 L379,482 Z" fill="#e6edf6"/>
    <!-- NI border -->
    <path d="M353,441 L340.7,449.2 L319.4,470.5 L327.4,475.8 L308.7,485.1 L322,503.7 L343.3,514.4 L351.3,506.4 L356.6,494.4 L372.6,514.4 L391.2,519.7" fill="none" stroke="#e8603c" stroke-width="1" opacity="0.9"/>
    <!-- graticule -->
    <path d="M259.5,96 L246.9,246 L234.6,400 L227.8,540" fill="none" stroke="#fff" stroke-width="1.3" opacity="0.92"/>
    <path d="M447,96 L446,540" fill="none" stroke="#fff" stroke-width="0.9" opacity="0.85"/>
    <path d="M213,441.2 Q462,461.4 712,443.5" fill="none" stroke="#fff" stroke-width="0.9" opacity="0.85"/>
    <path d="M636.2,96 L646.3,246 L657.1,400 L665.1,540" fill="none" stroke="#eeee44" stroke-width="1.1"/>
    <text x="223.5" y="447.8" font-size="6.8" fill="#fff" font-weight="bold" font-family="Liberation Sans" opacity="0.95">55° 00' 00.0"N</text>
    <text x="653.5" y="322.3" font-size="7.3" fill="#eaea40" font-weight="bold" font-family="Liberation Sans">Prime Meridian</text>
    <!-- crosshair -->
    <g fill="#2e2e2e">
      <rect x="460.8" y="311" width="2.1" height="4.8" rx="1"/>
      <rect x="460.8" y="320" width="2.1" height="4.8" rx="1"/>
      <rect x="455" y="317" width="4.8" height="1.9" rx="0.9"/>
      <rect x="464" y="317" width="4.4" height="1.9" rx="0.9"/>
    </g>
    <path d="M461.85,312.5 V314.5 M461.85,321.5 V323.5" stroke="#888" stroke-width="0.6"/>
    <!-- cities -->
    <circle cx="476.3" cy="386.1" r="2.3" fill="#f0d030" stroke="#333" stroke-width="0.7"/>
    <circle cx="520.7" cy="379.5" r="2.3" fill="#e8703a" stroke="#333" stroke-width="0.7"/>
    <circle cx="404.7" cy="480.9" r="2.3" fill="#e8703a" stroke="#333" stroke-width="0.7"/>
    <circle cx="588" cy="538.5" r="2" fill="#f0d030" stroke="#333" stroke-width="0.7"/>
    <circle cx="597" cy="538" r="2" fill="#f0d030" stroke="#333" stroke-width="0.7"/>
    <circle cx="650" cy="539" r="2" fill="#f0d030" stroke="#333" stroke-width="0.7"/>
    <g font-family="Liberation Sans" font-weight="bold" stroke="#fff" stroke-width="1.6" paint-order="stroke" stroke-linejoin="round">
      <text x="482" y="394.5" font-size="7.2" fill="#222">Glasgow</text>
      <text x="526" y="387.5" font-size="7.2" fill="#222" font-style="italic">Edinburgh</text>
      <text x="410.5" y="489" font-size="7.2" fill="#222" font-style="italic">Belfast</text>
      <text x="439.3" y="505.5" font-size="10.4" fill="#444" stroke-width="2">Isle of Man</text>
      <text x="536.8" y="522" font-size="10.3" fill="#444" stroke-width="2">United Kingdom</text>
      <text x="654.5" y="535" font-size="7.5" fill="#333" font-weight="normal" stroke-width="1.5">Public Domain</text>
    </g>
    <!-- overview map -->
    <rect x="219.5" y="102.5" width="108" height="57.5" fill="#c4c7cb" stroke="#333" stroke-width="1.2"/>
    
<g fill="#000" stroke="#000" stroke-width="0.9" stroke-linejoin="round">
<path d="M225.5,111.2 L228.4,110 L234,108.6 L240,107.6 L246,107 L252,107 L257,108.4 L257.5,116.1 L254.7,119 L251,120.8 L249.1,123.6 L250,125.5 L247.2,125.5 L245.3,124.6 L247.2,128.3 L251,128.8 L250,129.6 L244.4,126.5 L240.6,123.6 L237.8,119 L236,114.3 L230.3,114.3 L227,113.3 Z"/>
<path d="M254,107 L269.5,106.6 L267.5,110.5 L262,114 L258.5,112 L256,109.5 Z"/>
<path d="M250,129.3 L255.7,128.3 L263.2,133.5 L260.4,138.7 L256.6,142.4 L254.7,147.1 L252.8,145.2 L252.4,137.7 L250,133 Z"/>
<path d="M271.8,116.1 L273.6,114.3 L275.5,112.4 L280.2,110.5 L286.8,109.6 L296.2,109.1 L305.6,108.6 L315,110 L324.3,111.5 L323.4,112.9 L318.7,113.3 L315,117.1 L312.1,120.8 L308.4,124.6 L305.6,129.3 L302.7,127.4 L299,125.5 L296.2,128.4 L293.4,123.7 L290.5,124.6 L287.7,123.7 L285.8,119.9 L282.1,119 L277.4,119.9 L272.7,119.4 Z"/>
<path d="M269.9,123.7 L272.7,120.8 L279.3,121.3 L284,122.7 L288.7,128.4 L285.8,132.1 L284,137.7 L280.2,141.5 L278.3,140.6 L276.5,132.1 L273.6,128.4 L269.9,128.4 Z"/>
<path d="M305.6,136.8 L310.3,134 L315,134.9 L316.8,139.6 L314,142.4 L306.5,141.5 Z"/>
<path d="M301,129.5 L306,130 L304,132 Z M307,130.5 L313,131 L311,133.5 L307,132.5 Z"/>
<path d="M286.3,135 L287.7,134.9 L287.4,138.7 L286,138.2 Z"/>
<path d="M320.6,142.4 L323.4,142.8 L321,144.3 Z"/>
<path d="M317,115.5 L319.5,115.2 L320.6,118 L318,119.9 Z"/>
<path d="M222.8,156.5 L229.4,154.1 L238.8,153.2 L248.2,153.7 L255.7,151.8 L259.4,154.1 L266.9,153.2 L275,151.8 L290,151.5 L305,151.2 L318,152 L324.3,153 L325,158 L221.9,158 Z"/>
</g>
<ellipse cx="249.5" cy="115" rx="1.6" ry="1.4" fill="#c4c7cb"/>

    <ellipse cx="271.2" cy="114" rx="2.4" ry="1.7" fill="#fff"/>
    <path d="M258.6,103 L254,160" stroke="#f4f4f4" stroke-width="0.8" opacity="0.55"/>
    <!-- compass -->
    <text x="684.9" y="113.5" font-size="6.5" font-weight="bold" text-anchor="middle" fill="#222" font-family="Liberation Sans">N</text>
    <circle cx="684.7" cy="132.9" r="17.7" fill="#c5c7ca" stroke="#444" stroke-width="0.9"/>
    <g transform="translate(684.5,132.8) rotate(-3)">
      <path d="M0,-14.5 L3,-3 L0,0 Z M0,14.5 L-3,3 L0,0 Z M-14.5,0 L-3,-3 L0,0 Z M14.5,0 L3,3 L0,0 Z" fill="#fff"/>
      <path d="M0,-14.5 L-3,-3 L0,0 Z M0,14.5 L3,3 L0,0 Z M-14.5,0 L-3,3 L0,0 Z M14.5,0 L3,-3 L0,0 Z" fill="#000"/>
    </g>
    <!-- navigation -->
    <circle cx="679.9" cy="318.8" r="20.5" fill="#b9bdc2" opacity="0.8"/>
    <rect x="671" y="330" width="18.5" height="174" rx="9" fill="#b9bdc2" opacity="0.8"/>
    <circle cx="680.4" cy="319.3" r="16.3" fill="#9aa0a6" opacity="0.5"/><circle cx="679.9" cy="318.6" r="16.3" fill="#fbfbfb"/>
    <g fill="#505050">
      <path d="M675,311 L679.9,305.5 L684.8,311 Z"/>
      <path d="M675,326.2 L679.9,331.7 L684.8,326.2 Z"/>
      <path d="M671.7,313.6 L666.4,318.6 L671.7,323.6 Z"/>
      <path d="M688.1,313.6 L693.4,318.6 L688.1,323.6 Z"/>
    </g>
    <path d="M673.6,345.5 Q673.6,343.5 680.4,343.5 Q687.2,343.5 687.2,345.5 L687.2,356 Q687.2,360.7 680.4,360.7 Q673.6,360.7 673.6,356 Z" fill="#fafafa"/>
    <path d="M675.8,352.3 L680.4,347.8 L685,352.3 L683.6,352.3 L683.6,356 L681.5,356 L681.5,353.6 L679.3,353.6 L679.3,356 L677.2,356 L677.2,352.3 Z" fill="#444"/><rect x="682.6" y="348.3" width="1.2" height="2.5" fill="#444"/>
    <rect x="676" y="383" width="8" height="105" fill="#3f4447"/>
    <g fill="#575c60">
      <circle cx="680" cy="390" r="1.6"/><circle cx="680" cy="398" r="1.6"/><circle cx="680" cy="406" r="1.6"/>
      <circle cx="680" cy="430" r="1.6"/><circle cx="680" cy="438" r="1.6"/><circle cx="680" cy="446" r="1.6"/><circle cx="680" cy="454" r="1.6"/><circle cx="680" cy="462" r="1.6"/><circle cx="680" cy="470" r="1.6"/><circle cx="680" cy="478" r="1.6"/>
    </g>
    <path d="M673.6,384.3 L673.6,372 Q673.6,368 680.4,368 Q687.2,368 687.2,372 L687.2,384.3 Z" fill="#fafafa"/>
    <path d="M676.5,376.5 H684.3 M680.4,372.6 V380.4" stroke="#333" stroke-width="1.3"/>
    <path d="M672.7,487 L687.5,487 L687.5,497 Q687.5,502.4 680.1,502.4 Q672.7,502.4 672.7,497 Z" fill="#fafafa"/>
    <path d="M676.8,495 H683.4" stroke="#333" stroke-width="1.3"/>
    <circle cx="680.1" cy="417.7" r="7" fill="#fafafa" stroke="#d0d0d0" stroke-width="0.5"/>
    <!-- scale bar -->
    <rect x="220.5" y="516.5" width="254" height="17.5" fill="#dcdcdc" fill-opacity="0.6" stroke="#3a3a3a" stroke-width="1"/>
    <rect x="224" y="528.2" width="240" height="3" fill="#000"/>
    <rect x="271.8" y="528.7" width="47.9" height="2" fill="#fff"/>
    <rect x="367.5" y="528.7" width="47.9" height="2" fill="#fff"/>
    <g font-family="Liberation Sans" font-size="7.2" fill="#222">
      <text x="222.5" y="526">0 km</text>
      <text x="313.5" y="526">140</text>
      <text x="408.5" y="526">280</text>
    </g>
    <text x="476" y="533" font-size="6.5" fill="#fff" font-family="Liberation Sans">0.0"W</text>
  </g>
</svg>

<!-- status bar -->
<div class="a" style="left:40px;top:540px;width:672px;height:19px;background:#eff0f1;border-top:1px solid #d6d8da"></div>
<div class="a t" style="left:45px;top:546.3px;transform:scaleX(0.97);transform-origin:0 0">Position: not available</div>
<div class="a t" style="left:230.5px;top:546.3px">Altitude:</div>
<div class="a t" style="left:267.5px;top:546.3px">256.2 km</div>
<div class="a t" style="left:325.5px;top:546.3px;transform:scaleX(0.94);transform-origin:0 0">Time: 12/9/2024 12:06 P. M.</div>
</body></html>
